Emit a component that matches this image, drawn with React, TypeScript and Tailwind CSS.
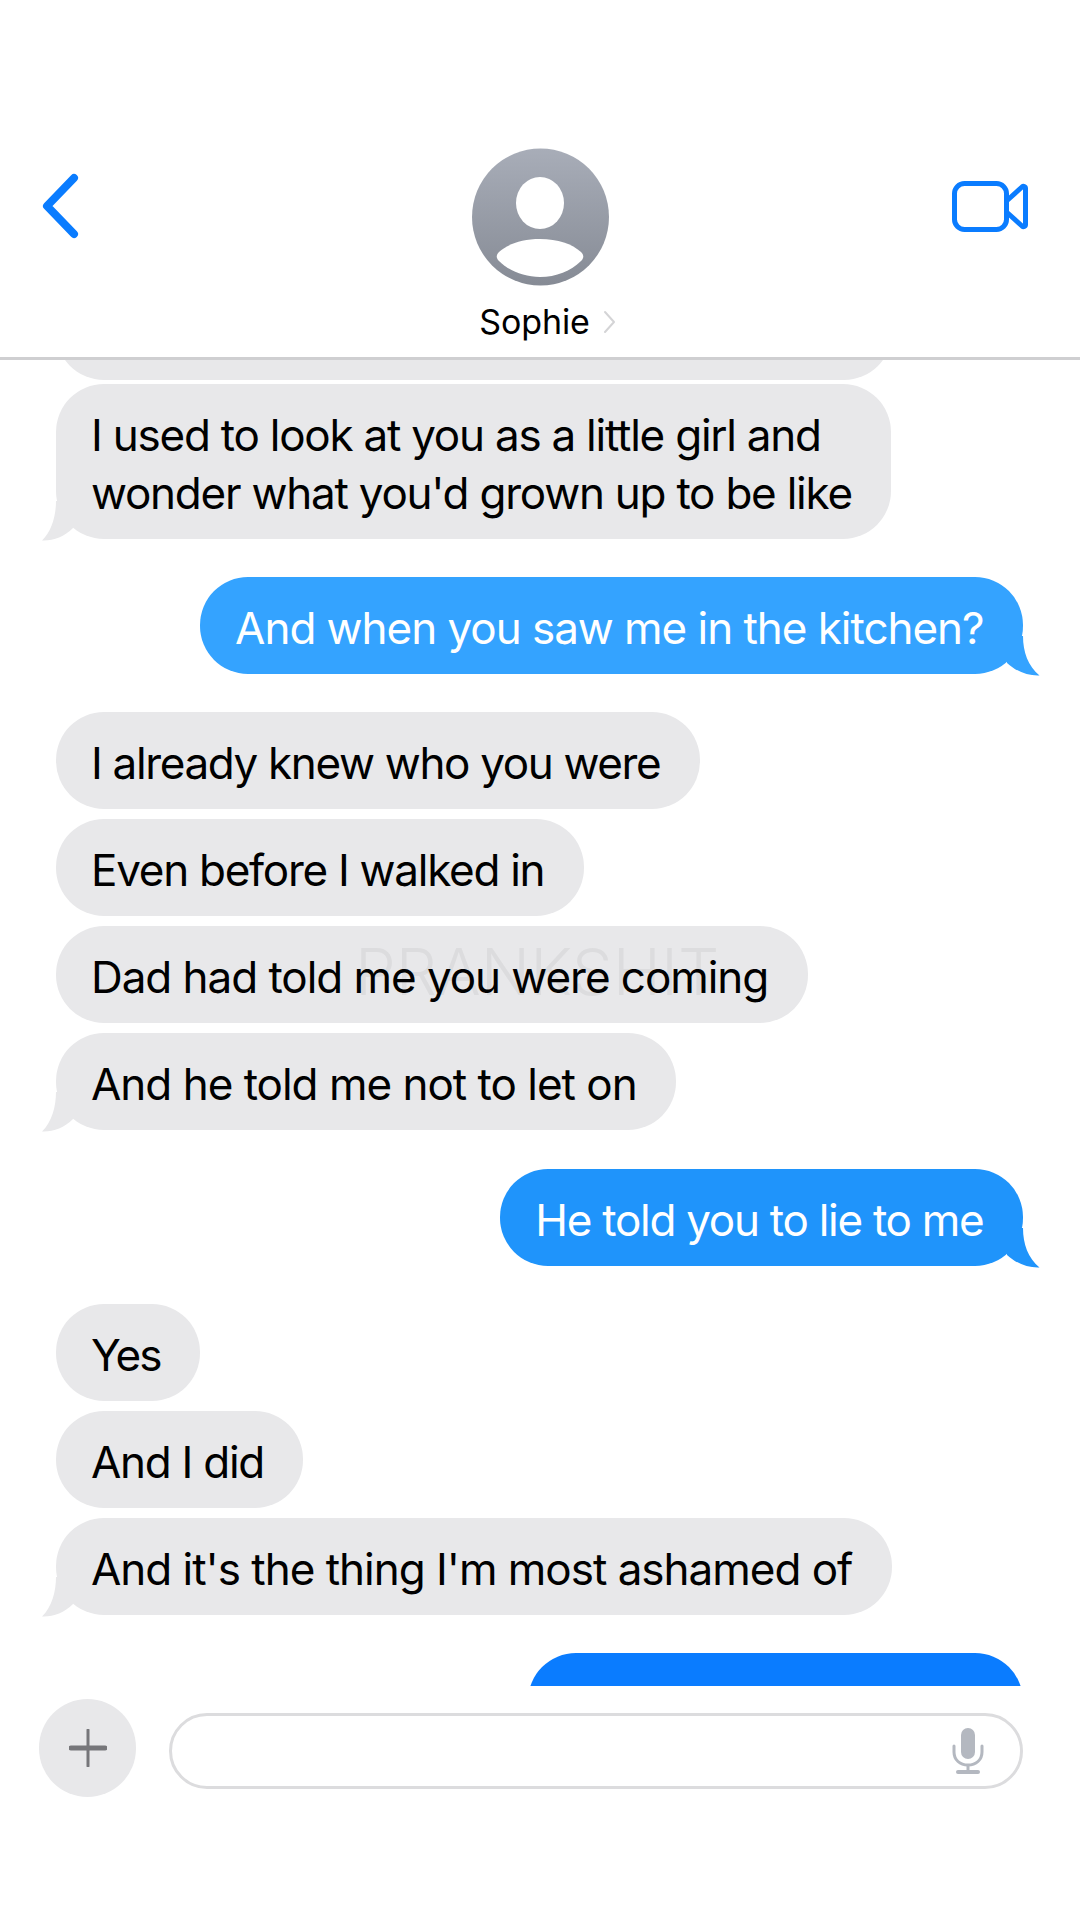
const font = { fontFamily: 'Inter, "Liberation Sans", sans-serif' };

function LeftTail() {
  return (
    <svg className="absolute bottom-[-2px] left-[-15px]" width="40" height="40" viewBox="0 0 40 40">
      <path d="M15 0 C15 14 11 30 1 39.5 C12 40 23 36 32 27 L32 0 Z" fill="#e8e8ea" />
    </svg>
  );
}

function RightTail({ color }: { color: string }) {
  return (
    <svg className="absolute bottom-[-2px] right-[-17px]" width="40" height="40" viewBox="0 0 40 40">
      <path d="M23 0 C23 16 28 30 39.5 39.5 C28 40 17 36 7 27 L7 0 Z" fill={color} />
    </svg>
  );
}

function Received({ text, tail, className = 'tracking-[-1px]' }: { text: React.ReactNode; tail?: boolean; className?: string }) {
  return (
    <div className={`relative self-start ml-[56px] rounded-[48px] bg-[#e8e8ea] pl-[35px] pr-[39.5px] pt-[22px] pb-[17px] text-[44px] leading-[58px] text-black whitespace-nowrap ${className}`}>
      {tail && <LeftTail />}
      <span className="relative">{text}</span>
    </div>
  );
}

function Sent({ text, color, className = '' }: { text: string; color: string; className?: string }) {
  return (
    <div
      className={`relative self-end mr-[57px] rounded-[48px] pl-[35px] pr-[39.5px] pt-[22px] pb-[17px] text-[44px] leading-[58px] text-white whitespace-nowrap ${className}`}
      style={{ backgroundColor: color }}
    >
      <RightTail color={color} />
      <span className="relative">{text}</span>
    </div>
  );
}

export default function App() {
  return (
    <div className="flex h-[1920px] w-[1080px] flex-col overflow-hidden bg-white" style={font}>
      {/* nav bar */}
      <header className="relative flex h-[360px] shrink-0 flex-col items-center border-b-[3px] border-[#cfcfd1] pt-[148px]">
        <svg className="absolute left-[40px] top-[172px]" width="40" height="68" viewBox="0 0 40 68" fill="none">
          <path d="M34 6 L7 34 L34 62" stroke="#0a7cff" strokeWidth="8" strokeLinecap="round" strokeLinejoin="round" />
        </svg>
        <svg width="137" height="138" viewBox="0 0 137 138">
          <defs>
            <linearGradient id="avatar" x1="0" y1="0" x2="0" y2="1">
              <stop offset="0" stopColor="#a8adb8" />
              <stop offset="1" stopColor="#868b95" />
            </linearGradient>
          </defs>
          <circle cx="68.5" cy="69" r="68.5" fill="url(#avatar)" />
          <ellipse cx="68" cy="55" rx="24" ry="26" fill="#fff" />
          <path d="M27 104 C36 96 50 91 68 91 C86 91 100 96 109 104 C112 107 112 110 109 113 C99 123 84 129 68 129 C52 129 37 123 27 113 C24 110 24 107 27 104 Z" fill="#fff" />
        </svg>
        <div className="mt-[14px] flex items-center pl-[15px]">
          <span className="text-[34px] leading-[44px] tracking-[-0.1px] text-black">Sophie</span>
          <svg className="ml-[13px]" width="13" height="24" viewBox="0 0 13 24" fill="none">
            <path d="M2 2 L11 12 L2 22" stroke="#d4d4d6" strokeWidth="2" strokeLinecap="round" strokeLinejoin="round" />
          </svg>
        </div>
        <svg className="absolute left-[952px] top-[181px]" width="76" height="51" viewBox="0 0 76 51" fill="none" stroke="#0a7cff" strokeWidth="5">
          <rect x="2.5" y="2.5" width="52" height="46" rx="10" />
          <path d="M54.5 20 L70 6 C71.5 4.8 73.5 5.5 73.5 7.5 L73.5 43.5 C73.5 45.5 71.5 46.2 70 45 L54.5 31" strokeLinejoin="round" />
        </svg>
      </header>

      {/* thread */}
      <main className="relative flex h-[1326px] shrink-0 flex-col overflow-hidden">
        <div className="mt-[-77px] ml-[56px] h-[97px] w-[836px] shrink-0 rounded-[48px] bg-[#e8e8ea]" />
        <Received
          className="mt-[4px] tracking-[-1.24px]"
          tail
          text={
            <>
              I used to look at you as a little girl and
              <br />
              wonder what you'd grown up to be like
            </>
          }
        />
        <Sent className="mt-[38px] tracking-[-1.04px]" color="#34a3ff" text="And when you saw me in the kitchen?" />
        <Received className="mt-[38px] tracking-[-1.34px]" text="I already knew who you were" />
        <Received className="mt-[10px] tracking-[-1.27px]" text="Even before I walked in" />
        <Received className="mt-[10px] tracking-[-1.05px]" text="Dad had told me you were coming" />
        <Received className="mt-[10px] tracking-[-1.01px]" tail text="And he told me not to let on" />
        <Sent className="mt-[39px] tracking-[-1.27px]" color="#1f94fb" text="He told you to lie to me" />
        <Received className="mt-[38px] tracking-[-2px]" text="Yes" />
        <Received className="mt-[10px] tracking-[-1.27px]" text="And I did" />
        <Received className="mt-[10px] tracking-[-1.02px]" tail text="And it's the thing I'm most ashamed of" />
        <div className="mt-[38px] mr-[57px] h-[97px] w-[495px] shrink-0 self-end rounded-[48px] bg-[#0a7cff]" />
        <div className="absolute left-[355px] top-[574px] text-[65px] font-light leading-[76px] text-black/[0.05]">PRANKSHIT</div>
      </main>

      {/* input bar */}
      <footer className="flex items-start gap-[33px] pl-[39px] pt-[13px]">
        <div className="flex h-[98px] w-[97px] items-center justify-center rounded-full bg-[#e8e8ea]">
          <svg width="38" height="38" viewBox="0 0 38 38">
            <path d="M19 1 V37" stroke="#76767a" strokeWidth="3" strokeLinecap="round" />
            <path d="M2 19 H36" stroke="#76767a" strokeWidth="5" strokeLinecap="round" />
          </svg>
        </div>
        <div className="mt-[14px] flex h-[76px] w-[854px] items-center justify-end rounded-[38px] border-[3px] border-[#dcdcde] pr-[36px]">
          <svg width="32" height="46" viewBox="0 0 32 46" fill="none">
            <rect x="9" y="0" width="14" height="31" rx="7" fill="#b4b8c0" />
            <path d="M2 18 V24 C2 32 8 37 16 37 C24 37 30 32 30 24 V18" stroke="#b4b8c0" strokeWidth="3" strokeLinecap="round" />
            <path d="M16 37 V43" stroke="#b4b8c0" strokeWidth="3" />
            <path d="M6 44 H26" stroke="#b4b8c0" strokeWidth="4" strokeLinecap="round" />
          </svg>
        </div>
      </footer>
    </div>
  );
}
